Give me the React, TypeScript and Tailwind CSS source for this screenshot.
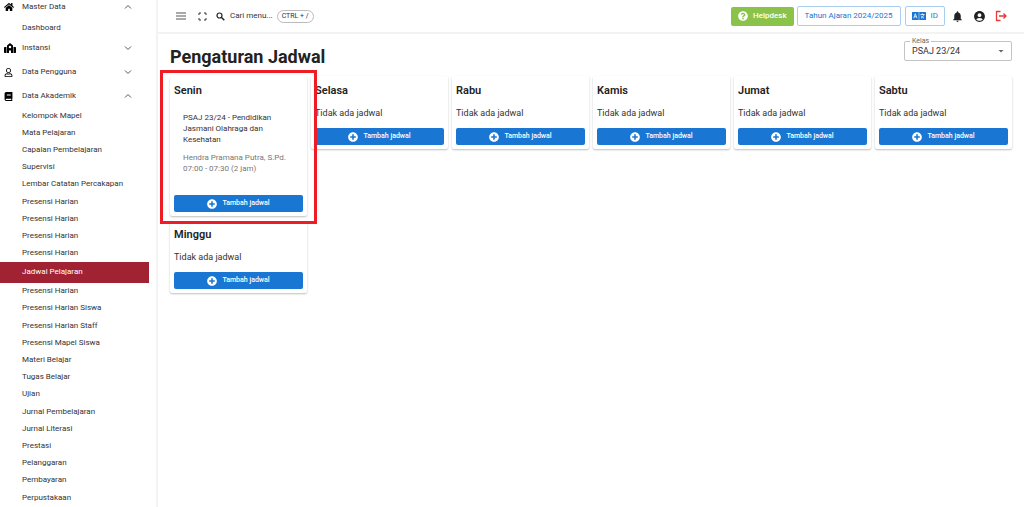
import type { ReactNode } from 'react'
import { FaHome, FaRegUser, FaBook, FaPlusCircle, FaQuestionCircle } from 'react-icons/fa'
import { MdNotifications, MdAccountCircle, MdArrowDropDown } from 'react-icons/md'

function Chevron({ open }: { open: boolean }) {
  return (
    <svg viewBox="0 0 8 8" className="size-2" fill="none" stroke="#555" strokeWidth="1">
      <path d={open ? 'M1 5.500 4 2.500l3 3' : 'M1 2.500l3 3 3-3'} />
    </svg>
  )
}

function SchoolIcon() {
  return (
    <svg viewBox="0 0 24 20" className="h-[10px] w-3" fill="currentColor">
      <path d="M1.500 8H5v12H1.500A1.500 1.500 0 0 1 0 18.500v-9A1.500 1.500 0 0 1 1.500 8zM19 8h3.500a1.500 1.500 0 0 1 1.500 1.500v9a1.500 1.500 0 0 1-1.500 1.500H19zM12 0l6 5v15h-4v-5h-4v5H6V5zm0 5.500a2.500 2.500 0 1 0 0 5 2.500 2.500 0 0 0 0-5z" fillRule="evenodd" />
    </svg>
  )
}

function TranslateIcon() {
  return (
    <svg viewBox="0 0 28 16" className="h-2 w-[14px]">
      <path fill="#1976d2" d="M1 0h12.500v16H1a1 1 0 0 1-1-1V1a1 1 0 0 1 1-1zM14.500 0H27a1 1 0 0 1 1 1v14a1 1 0 0 1-1 1H14.500z" />
      <path fill="none" stroke="#fff" strokeWidth="1.600" d="M3.500 12.500 6.700 3.500l3.200 9M4.700 9.500h4M17 5h8M21 3v2M23.500 5c-.5 3-2.500 5.500-5.500 7.500M18.500 7.500c1 2 3 4 5.500 5" />
    </svg>
  )
}

function Group({ icon, label, open }: { icon: ReactNode; label: string; open: boolean }) {
  return (
    <button type="button" aria-expanded={open} className="flex h-6 w-full shrink-0 items-center pl-1 pr-6 text-left">
      <span className="flex w-[18px] shrink-0 text-black">{icon}</span>
      <span className="flex-1">{label}</span>
      <Chevron open={open} />
    </button>
  )
}

const academic = [
  'Kelompok Mapel', 'Mata Pelajaran', 'Capaian Pembelajaran', 'Supervisi', 'Lembar Catatan Percakapan',
  'Presensi Harian', 'Presensi Harian', 'Presensi Harian', 'Presensi Harian', 'Jadwal Pelajaran',
  'Presensi Harian', 'Presensi Harian Siswa', 'Presensi Harian Staff', 'Presensi Mapel Siswa',
  'Materi Belajar', 'Tugas Belajar', 'Ujian', 'Jurnal Pembelajaran', 'Jurnal Literasi', 'Prestasi',
  'Pelanggaran', 'Pembayaran', 'Perpustakaan',
]

function Sidebar() {
  return (
    <nav className="flex min-h-screen w-[158px] shrink-0 flex-col border-r-2 border-[#f3f3f3] pb-px text-[8px] leading-3 text-[#333]">
      <div className="-mt-[5px]">
        <Group icon={<FaHome className="size-[10px]" />} label="Master Data" open />
      </div>
      <a href="#dashboard" className="flex h-[17px] items-center pl-[22px]">Dashboard</a>
      <Group icon={<SchoolIcon />} label="Instansi" open={false} />
      <Group icon={<FaRegUser className="size-[9px]" />} label="Data Pengguna" open={false} />
      <Group icon={<FaBook className="size-[9px]" />} label="Data Akademik" open />
      <ul className="-mt-px flex flex-1 flex-col">
        {academic.map((name, i) =>
          name === 'Jadwal Pelajaran' ? (
            <li key={i} className="h-[21px] shrink-0 pr-[7px]">
              <a href="#jadwal" aria-current="page" className="flex h-full items-center bg-[#a12232] pl-[22px] text-white">{name}</a>
            </li>
          ) : (
            <li key={i} className="flex flex-1">
              <a href="#menu" className="flex flex-1 items-center pl-[22px]">{name}</a>
            </li>
          ),
        )}
      </ul>
    </nav>
  )
}

function Header() {
  return (
    <header className="flex h-[34px] items-center border-b-2 border-[#f3f3f3] pl-[18px] pr-4 text-[8px] text-[#333]">
      <button type="button" aria-label="Menu">
        <svg viewBox="0 0 10 10" className="size-[10px]" stroke="#555" strokeWidth="1">
          <path d="M0 2h10M0 5h10M0 8h10" />
        </svg>
      </button>
      <button type="button" aria-label="Layar penuh" className="ml-3">
        <svg viewBox="0 0 9 9" className="size-[9px]" fill="none" stroke="#333" strokeWidth="1">
          <path d="M1 3V1h2M6 1h2v2M8 6v2H6M3 8H1V6" />
        </svg>
      </button>
      <button type="button" className="ml-[9px] flex items-center">
        <svg viewBox="0 0 9 9" className="size-[9px]" fill="none" stroke="#222">
          <circle cx="3.500" cy="3.500" r="2.500" strokeWidth="1.200" />
          <path d="M5.300 5.300 8.300 8.300" strokeWidth="1.500" />
        </svg>
        <span className="ml-[5px]">Cari menu...</span>
        <kbd className="ml-1 flex h-[13px] items-center rounded-full border border-[#bbb] px-1 font-[Roboto,sans-serif] text-[7px]">CTRL + /</kbd>
      </button>
      <div className="ml-auto flex items-center gap-[3px]">
        <button type="button" className="flex h-[19px] items-center gap-[5px] rounded-xs bg-[#8bc34a] px-[7px] font-medium text-white">
          <FaQuestionCircle className="size-[10px]" />
          Helpdesk
        </button>
        <button type="button" className="h-5 rounded-xs border border-[#a9cdf1] px-[7px] text-[#1976d2]">Tahun Ajaran 2024/2025</button>
        <button type="button" className="ml-px flex h-5 items-center gap-[5px] rounded-xs border border-[#a9cdf1] px-[6px] text-[#1976d2]">
          <TranslateIcon />
          ID
        </button>
      </div>
      <div className="ml-[6px] flex items-center gap-[9px] text-[#222]">
        <button type="button" aria-label="Notifikasi"><MdNotifications className="size-[13px]" /></button>
        <button type="button" aria-label="Akun"><MdAccountCircle className="size-[13px]" /></button>
        <button type="button" aria-label="Keluar" className="pr-px">
          <svg viewBox="0 0 12 12" className="size-3" fill="none" stroke="#e53935" strokeWidth="1.300">
            <path d="M5.500 1.500H1.500v9h4M4 6h7M8.500 3.500 11 6 8.500 8.500" />
          </svg>
        </button>
      </div>
    </header>
  )
}

function AddButton() {
  return (
    <button type="button" className="flex h-[17px] w-full items-center justify-center gap-[5px] rounded-xs bg-[#1976d2] text-[7px] font-medium text-white">
      <FaPlusCircle className="size-[10px]" />
      Tambah jadwal
    </button>
  )
}

function DayCard({ day, children, highlighted }: { day: string; children?: ReactNode; highlighted?: boolean }) {
  return (
    <section className="relative rounded-xs bg-white px-1 pb-1 pt-[5px] shadow-[0_1px_2px_rgba(0,0,0,0.25)]">
      <h2 className="text-[11px] font-semibold leading-[19px] text-[#222]">{day}</h2>
      {children ?? <p className="mb-2 mt-[6px] text-[9px] leading-[14px] text-[#333]">Tidak ada jadwal</p>}
      <AddButton />
      {highlighted && <div className="pointer-events-none absolute -bottom-2 -left-[10px] -right-[10px] -top-[6px] z-10 border-3 border-[#ee1c25]" />}
    </section>
  )
}

export default function App() {
  return (
    <div className="flex min-h-screen bg-white font-[Roboto,sans-serif]">
      <Sidebar />
      <div className="min-w-0 flex-1">
        <Header />
        <main className="px-3">
          <div className="flex h-[42px] items-start justify-between">
            <h1 className="mt-[11px] text-[18px] font-bold leading-6 text-[#222]">Pengaturan Jadwal</h1>
            <div className="relative mt-[7px] w-[108px]">
              <label htmlFor="kelas" className="absolute -top-1 left-[6px] bg-white px-[2px] text-[7px] leading-[9px] text-[#666]">Kelas</label>
              <select id="kelas" className="block h-5 w-full appearance-none rounded-xs border border-[#c4c4c4] bg-transparent pl-[7px] pt-px text-[9px] text-[#333]">
                <option>PSAJ 23/24</option>
              </select>
              <MdArrowDropDown className="pointer-events-none absolute right-[5px] top-1 size-3 text-[#666]" />
            </div>
          </div>
          <div className="grid grid-cols-6 items-start gap-1">
            <DayCard day="Senin" highlighted>
              <div className="mb-[21px] mt-3 px-[9px] text-[8px] leading-[11px]">
                <p className="text-[#333]">PSAJ 23/24 - Pendidikan Jasmani Olahraga dan Kesehatan</p>
                <p className="mt-[7px] text-[#777]">Hendra Pramana Putra, S.Pd.</p>
                <p className="text-[#777]">07:00 - 07:30 (2 jam)</p>
              </div>
            </DayCard>
            <DayCard day="Selasa" />
            <DayCard day="Rabu" />
            <DayCard day="Kamis" />
            <DayCard day="Jumat" />
            <DayCard day="Sabtu" />
            <DayCard day="Minggu" />
          </div>
        </main>
      </div>
    </div>
  )
}
